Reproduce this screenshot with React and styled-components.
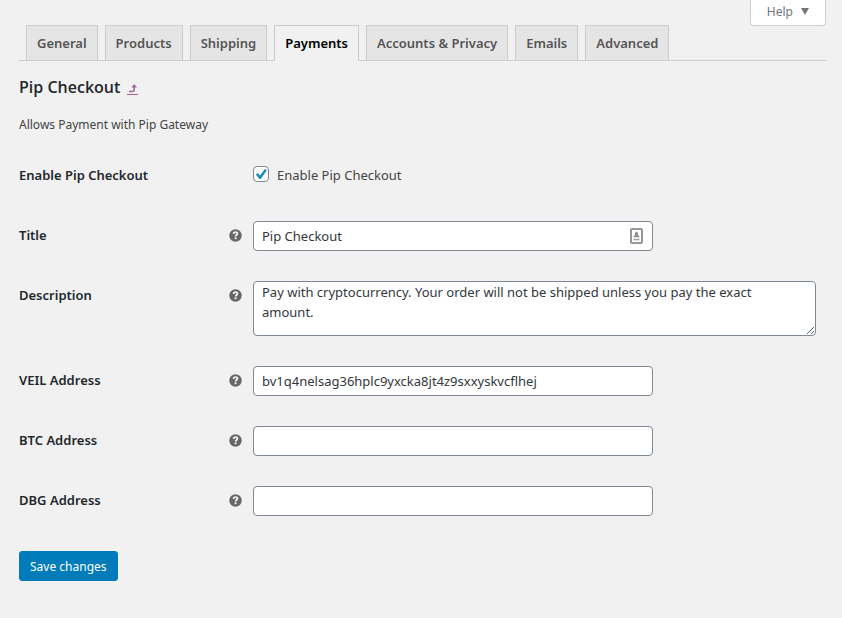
import React from "react";
import styled, { createGlobalStyle, css } from "styled-components";

const GlobalStyle = createGlobalStyle`
  *, *::before, *::after { box-sizing: border-box; }
  body {
    margin: 0;
    background: #f1f1f1;
    color: #444;
    font-family: "Noto Sans", "Open Sans", sans-serif;
    font-size: 13px;
    line-height: 20px;
  }
`;

const smallText = css`
  font-family: inherit;
  font-size: 12px;
  line-height: 20px;
`;

const Page = styled.div`
  padding: 0 16px 37px 19px;
`;

const ScreenMeta = styled.div`
  display: flex;
  justify-content: flex-end;
`;

const HelpButton = styled.button`
  ${smallText}
  display: flex;
  align-items: center;
  gap: 8px;
  height: 26px;
  margin: 0 0 -1px;
  padding: 0 16px 1px;
  border: 1px solid #ccd0d4;
  border-top: 0;
  border-radius: 0 0 4px 4px;
  background: #fff;
  color: #72777c;

  svg {
    margin-bottom: 2px;
  }
`;

const Tabs = styled.nav`
  display: flex;
  gap: 7px;
  padding-left: 7px;
  border-bottom: 1px solid #ccc;
`;

const Tab = styled.a`
  margin-bottom: -1px;
  padding: 5px 10px;
  border: 1px solid #ccc;
  background: #e5e5e5;
  color: #555;
  font-weight: 600;
  line-height: 24px;
  text-decoration: none;
  white-space: nowrap;
  ${({ $active }) =>
    $active &&
    css`
      border-bottom-color: #f1f1f1;
      background: #f1f1f1;
      color: #000;
    `}
`;

const Heading = styled.h2`
  display: flex;
  align-items: center;
  gap: 7px;
  margin: 14px 0 0;
  color: #23282d;
  font-family: "Open Sans", "Noto Sans", sans-serif;
  font-size: 16px;
  font-weight: 600;
  line-height: 24px;
`;

const BackLink = styled.a`
  display: flex;
  margin-top: 4px;
  color: #a36597;
`;

const Intro = styled.p`
  ${smallText}
  margin: 16px 0 25px;
`;

const Form = styled.form`
  display: grid;
  gap: 30px;
  padding-right: 10px;
`;

const Row = styled.div`
  display: grid;
  grid-template-columns: 210px minmax(0, 1fr);
  column-gap: 24px;
  align-items: start;
`;

const RowHead = styled.div`
  display: flex;
  align-items: center;
  justify-content: space-between;
  height: 28px;
  margin-right: -13px;
`;

const Label = styled.label`
  color: #23282d;
  font-weight: 600;
`;

const HelpTip = styled.button`
  display: flex;
  padding: 0;
  border: 0;
  background: none;
  color: #666;
`;

const fieldStyle = css`
  display: block;
  width: 100%;
  margin: 0;
  border: 1px solid #7e8993;
  border-radius: 4px;
  background: #fff;
  color: #32373c;
  font: inherit;
`;

const FieldBox = styled.div`
  position: relative;
  width: 100%;
  max-width: 400px;
`;

const TextInput = styled.input`
  ${fieldStyle}
  height: 30px;
  padding: 0 8px;
`;

const FillButton = styled.button`
  position: absolute;
  top: 7px;
  right: 10px;
  display: flex;
  padding: 0;
  border: 0;
  background: none;
`;

const TextArea = styled.textarea`
  ${fieldStyle}
  height: 55px;
  padding: 0 16px 0 8px;
  overflow: auto;
  resize: vertical;
`;

const ToggleRow = styled(Row)`
  min-height: 31px;
  padding-top: 1px;
`;

const CheckLabel = styled.label`
  display: flex;
  align-items: center;
  gap: 8px;
  height: 28px;
`;

const CheckStack = styled.span`
  display: grid;
  place-items: center;
  margin-bottom: 2px;

  & > * {
    grid-area: 1 / 1;
  }

  svg {
    visibility: hidden;
    pointer-events: none;
  }

  input:checked + svg {
    visibility: visible;
  }
`;

const Checkbox = styled.input`
  appearance: none;
  width: 16px;
  height: 16px;
  margin: 0;
  border: 1px solid #7e8993;
  border-radius: 4px;
  background: #fff;
`;

const SaveButton = styled.button`
  ${smallText}
  justify-self: start;
  height: 30px;
  margin-top: 5px;
  padding: 2px 10px 0;
  border: 1px solid #007cba;
  border-radius: 3px;
  background: #007cba;
  color: #fff;
  white-space: nowrap;
`;

const tabs = [
  "General",
  "Products",
  "Shipping",
  "Payments",
  "Accounts & Privacy",
  "Emails",
  "Advanced",
];

const addresses = [
  { id: "veil", label: "VEIL Address", value: "bv1q4nelsag36hplc9yxcka8jt4z9sxxyskvcflhej" },
  { id: "btc", label: "BTC Address", value: "" },
  { id: "dbg", label: "DBG Address", value: "" },
];

const QuestionIcon = () => (
  <svg width="13" height="13" viewBox="0 0 13 13" aria-hidden="true">
    <circle cx="6.5" cy="6.5" r="6.2" fill="currentColor" />
    <path
      d="M4.5 4.9C4.6 3.7 5.4 3.2 6.5 3.2c1.2 0 1.9.6 1.9 1.5 0 1.3-1.8 1.3-1.8 2.9"
      fill="none"
      stroke="#f1f1f1"
      strokeWidth="1.8"
    />
    <rect x="5.6" y="8.4" width="2" height="1.8" fill="#f1f1f1" />
  </svg>
);

const CheckIcon = () => (
  <svg width="16" height="16" viewBox="0 0 16 16" aria-hidden="true">
    <path d="M2.8 8.4 5 7.1l2 2.4L11.8 3l2.1 1.2L7.8 13H6.3z" fill="#1e8cbe" />
  </svg>
);

const BackIcon = () => (
  <svg width="11" height="12" viewBox="0 0 11 12" aria-hidden="true">
    <path d="M2 8.5h3.2q2 0 2-2V4" fill="none" stroke="currentColor" strokeWidth="1.5" />
    <path d="M7.2 1 10 4.6H4.4z" fill="currentColor" />
    <path d="M0 11.5h11" stroke="currentColor" />
  </svg>
);

const ContactIcon = () => (
  <svg width="13" height="16" viewBox="0 0 13 16" aria-hidden="true">
    <rect x="1" y="1" width="11" height="14" rx="1" fill="#fff" stroke="#979797" strokeWidth="2" />
    <path d="M6.5 3.2 8 5v2l1.5 1.2v1h-6v-1L5 7V5z" fill="#8e8e8e" />
    <path d="M3.5 11.5h6" stroke="#a0a0a0" strokeWidth="1.6" />
  </svg>
);

function SettingRow({ id, label, tip = true, as: Container = Row, children }) {
  return (
    <Container>
      <RowHead>
        <Label htmlFor={id}>{label}</Label>
        {tip && (
          <HelpTip type="button" aria-label={`Help for ${label}`}>
            <QuestionIcon />
          </HelpTip>
        )}
      </RowHead>
      {children}
    </Container>
  );
}

export default function App() {
  return (
    <>
      <GlobalStyle />
      <Page>
        <ScreenMeta>
          <HelpButton type="button">
            Help
            <svg width="8" height="7" viewBox="0 0 8 7" aria-hidden="true">
              <path d="M0 0h8L4 7z" fill="currentColor" />
            </svg>
          </HelpButton>
        </ScreenMeta>
        <Tabs aria-label="Settings">
          {tabs.map((name) => (
            <Tab
              key={name}
              href="#"
              $active={name === "Payments"}
              aria-current={name === "Payments" ? "page" : undefined}
            >
              {name}
            </Tab>
          ))}
        </Tabs>
        <main>
          <Heading>
            Pip Checkout
            <BackLink href="#" aria-label="Return to payments">
              <BackIcon />
            </BackLink>
          </Heading>
          <Intro>Allows Payment with Pip Gateway</Intro>
          <Form onSubmit={(event) => event.preventDefault()}>
            <SettingRow id="enabled" label="Enable Pip Checkout" tip={false} as={ToggleRow}>
              <CheckLabel>
                <CheckStack>
                  <Checkbox id="enabled" type="checkbox" defaultChecked />
                  <CheckIcon />
                </CheckStack>
                Enable Pip Checkout
              </CheckLabel>
            </SettingRow>
            <SettingRow id="title" label="Title">
              <FieldBox>
                <TextInput id="title" type="text" defaultValue="Pip Checkout" />
                <FillButton type="button" aria-label="Fill in contact">
                  <ContactIcon />
                </FillButton>
              </FieldBox>
            </SettingRow>
            <SettingRow id="description" label="Description">
              <TextArea
                id="description"
                defaultValue="Pay with cryptocurrency. Your order will not be shipped unless you pay the exact amount."
              />
            </SettingRow>
            {addresses.map(({ id, label, value }) => (
              <SettingRow key={id} id={id} label={label}>
                <FieldBox>
                  <TextInput id={id} type="text" defaultValue={value} spellCheck={false} />
                </FieldBox>
              </SettingRow>
            ))}
            <SaveButton type="submit">Save changes</SaveButton>
          </Form>
        </main>
      </Page>
    </>
  );
}
